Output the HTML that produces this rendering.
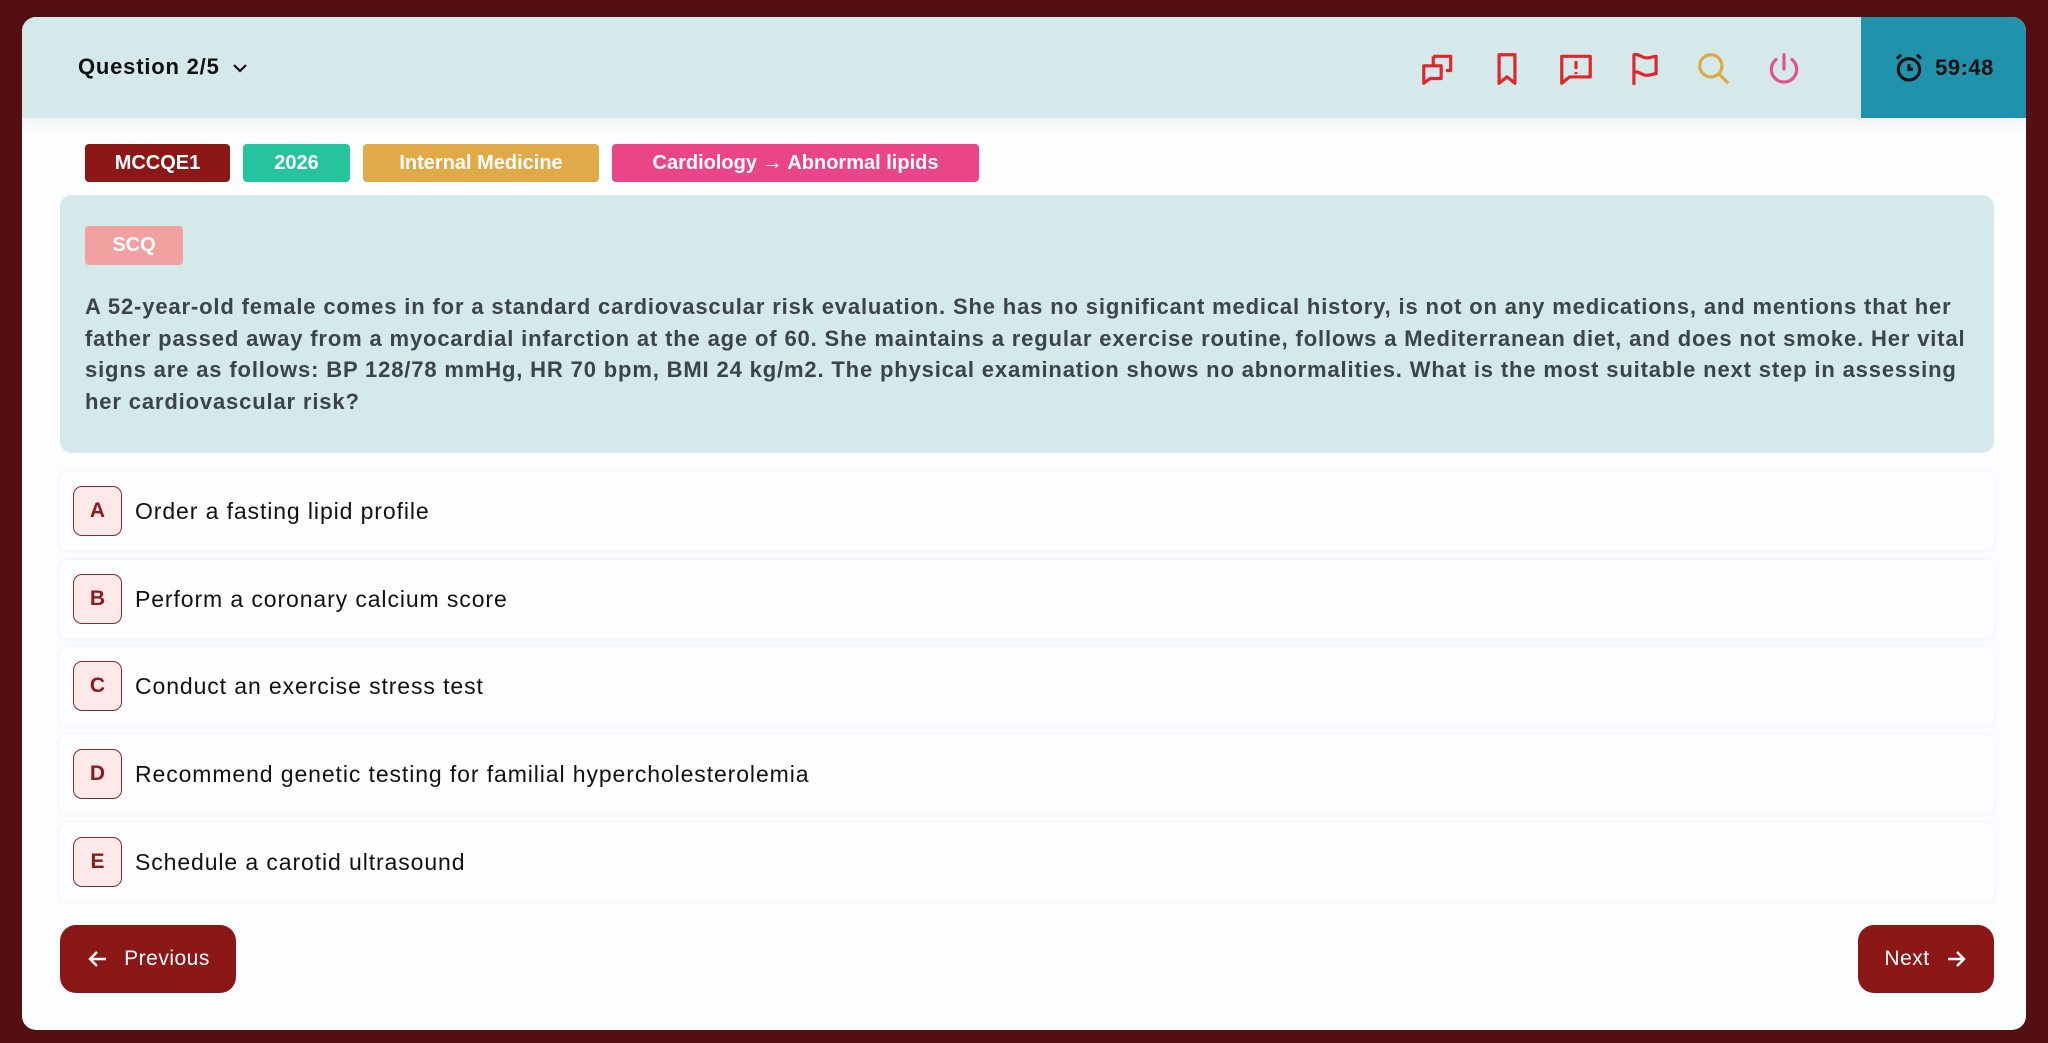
<!DOCTYPE html>
<html><head><meta charset="utf-8"><style>
*{box-sizing:border-box;margin:0;padding:0}
body{width:2048px;height:1043px;background:#540f12;font-family:"Liberation Sans",sans-serif;position:relative;overflow:hidden}
.card{position:absolute;left:22px;top:17px;width:2004px;height:1013px;background:#fbfdfe;border-radius:14px;overflow:hidden}
.hdr{position:absolute;left:0;top:0;width:2004px;height:101px;background:#d5e8ea;box-shadow:0 6px 14px rgba(0,0,0,0.05)}
.q{position:absolute;left:56px;top:37px;font-size:22px;font-weight:bold;color:#111;letter-spacing:0.8px}
.timer{position:absolute;left:1839px;top:0;width:165px;height:101px;background:#2192ab;display:flex;align-items:center;justify-content:center;gap:10px;font-size:22px;font-weight:bold;color:#111;letter-spacing:0.5px}
.ic{position:absolute;top:33px}
.tag{position:absolute;top:127px;height:38px;border-radius:4px;color:#fff;font-weight:bold;font-size:20px;display:flex;align-items:center;justify-content:center}
.qbox{position:absolute;left:60px;top:195px;width:1934px;height:258px;background:#d5e8ea;border-radius:12px}
.scq{position:absolute;left:25px;top:31px;width:98px;height:39px;background:#f2a0a0;border-radius:4px;color:#fff;font-weight:bold;font-size:20px;display:flex;align-items:center;justify-content:center}
.qt{position:absolute;left:25px;top:96px;font-size:22px;letter-spacing:0.85px;font-weight:bold;color:#3b4446;line-height:31.5px;white-space:nowrap}
.opt{position:absolute;left:60px;width:1934px;height:78px;background:#fdfeff;border-radius:8px;box-shadow:0 0 6px rgba(200,220,230,0.35)}
.lt{position:absolute;left:13px;top:14px;width:49px;height:50px;border:1.5px solid #8b2a2a;border-radius:9px;background:#fde8ea;color:#8b1a1a;font-weight:bold;font-size:21px;display:flex;align-items:center;justify-content:center}
.ot{position:absolute;left:75px;top:26px;font-size:23px;letter-spacing:0.9px;color:#111}
.btn{position:absolute;top:925px;height:68px;background:#8b1717;border-radius:16px;color:#fff;font-size:21px;letter-spacing:0.5px;display:flex;align-items:center;justify-content:center;gap:14px}
</style></head><body>
<div class="card">
<div class="hdr">
<div class="q">Question 2/5 <svg width="18" height="12" viewBox="0 0 18 12" style="margin-left:4px"><path d="M3 3l6 6 6-6" fill="none" stroke="#111" stroke-width="2.2"/></svg></div>
<svg class="ic" style="left:1397px" width="38" height="38" viewBox="0 0 24 24" fill="none" stroke="#e0262b" stroke-width="2" stroke-linejoin="round"><path d="M9 4h11v9h-3M3 10h11v8H7l-4 3z"/><path d="M9 4v6"/></svg>
<svg class="ic" style="left:1466px" width="38" height="38" viewBox="0 0 24 24" fill="none" stroke="#e0262b" stroke-width="2" stroke-linejoin="round"><path d="M7 3h10v18l-5-4-5 4z"/></svg>
<svg class="ic" style="left:1535px" width="38" height="38" viewBox="0 0 24 24" fill="none" stroke="#e0262b" stroke-width="2" stroke-linejoin="round"><path d="M3 4h18v13H8l-5 4z"/><path d="M12 7v5M12 14v1.2"/></svg>
<svg class="ic" style="left:1604px" width="38" height="38" viewBox="0 0 24 24" fill="none" stroke="#e0262b" stroke-width="2" stroke-linejoin="round"><path d="M5 22V3c3-1 5 2 8 2s4-1 6-1v11c-2 0-3 1-6 1s-5-3-8-2"/></svg>
<svg class="ic" style="left:1673px" width="38" height="38" viewBox="0 0 24 24" fill="none" stroke="#dcaa45" stroke-width="2"><circle cx="10" cy="10" r="7"/><path d="M15 15l6 6"/></svg>
<svg class="ic" style="left:1743px" width="38" height="38" viewBox="0 0 24 24" fill="none" stroke="#e3508a" stroke-width="2" stroke-linecap="round"><path d="M12 3v9"/><path d="M7 6a8 8 0 1 0 10 0"/></svg>
<div class="timer"><svg width="32" height="32" viewBox="0 0 24 24" fill="none" stroke="#111" stroke-width="2.3"><circle cx="12" cy="13" r="8"/><path d="M12 9v4h3M3 5l3-3M21 5l-3-3"/></svg>59:48</div>
</div>
<div class="tag" style="left:63px;width:145px;background:#8b1717">MCCQE1</div>
<div class="tag" style="left:221px;width:107px;background:#26c49c">2026</div>
<div class="tag" style="left:341px;width:236px;background:#e0aa48">Internal Medicine</div>
<div class="tag" style="left:590px;width:367px;background:#ea4588">Cardiology → Abnormal lipids</div>
</div>
<div class="qbox" style="left:60px"><div class="scq">SCQ</div>
<div class="qt">A 52-year-old female comes in for a standard cardiovascular risk evaluation. She has no significant medical history, is not on any medications, and mentions that her<br>father passed away from a myocardial infarction at the age of 60. She maintains a regular exercise routine, follows a Mediterranean diet, and does not smoke. Her vital<br>signs are as follows: BP 128/78 mmHg, HR 70 bpm, BMI 24 kg/m2. The physical examination shows no abnormalities. What is the most suitable next step in assessing<br>her cardiovascular risk?</div></div>
<div class="opt" style="top:472px"><div class="lt">A</div><div class="ot">Order a fasting lipid profile</div></div>
<div class="opt" style="top:560px"><div class="lt">B</div><div class="ot">Perform a coronary calcium score</div></div>
<div class="opt" style="top:647px"><div class="lt">C</div><div class="ot">Conduct an exercise stress test</div></div>
<div class="opt" style="top:735px"><div class="lt">D</div><div class="ot">Recommend genetic testing for familial hypercholesterolemia</div></div>
<div class="opt" style="top:823px"><div class="lt">E</div><div class="ot">Schedule a carotid ultrasound</div></div>
<div class="btn" style="left:60px;width:176px"><svg width="24" height="24" viewBox="0 0 24 24" fill="none" stroke="#fff" stroke-width="2.4"><path d="M20 12H5M11 5l-7 7 7 7"/></svg>Previous</div>
<div class="btn" style="left:1858px;width:136px">Next<svg width="24" height="24" viewBox="0 0 24 24" fill="none" stroke="#fff" stroke-width="2.4"><path d="M4 12h15M13 5l7 7-7 7"/></svg></div>
</body></html>
